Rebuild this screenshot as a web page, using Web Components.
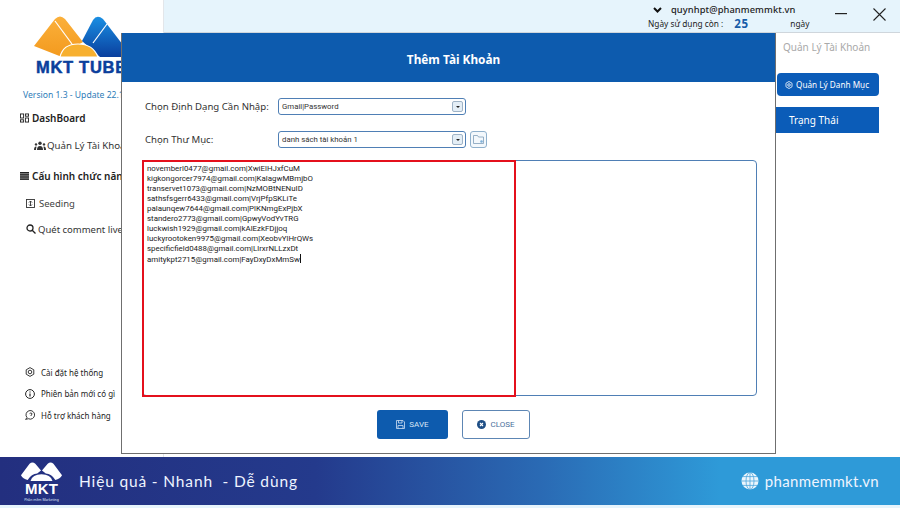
<!DOCTYPE html>
<html>
<head>
<meta charset="utf-8">
<style>
    html, body { margin: 0; padding: 0; background: #fff; }
    body { font-family: "Noto Sans", "Liberation Sans", sans-serif; width: 900px; height: 508px; overflow: hidden; }
</style>
</head>
<body>
<mkt-app>
    <mkt-sidebar slot="sidebar"></mkt-sidebar>
    <mkt-topbar slot="topbar"></mkt-topbar>
    <mkt-actions slot="actions"></mkt-actions>
    <mkt-footer slot="footer"></mkt-footer>
    <add-account-dialog slot="dialog"></add-account-dialog>
</mkt-app>

<script>
class MktApp extends HTMLElement
{
    constructor()
    {
        super();
        this.shadow = this.attachShadow({ mode: "open" });
    }

    connectedCallback()
    {
        this.shadow.innerHTML = `
            <style>
                :host { display: grid; position: relative; width: 900px; height: 508px; overflow: hidden;
                    grid-template-columns: 164px 1fr; grid-template-rows: 33px 424px 48px 3px; background: #fff; }
                .side { grid-column: 1; grid-row: 1 / 3; border-right: 1px solid #e3e6ea; }
                .top { grid-column: 2; grid-row: 1; }
                .main { grid-column: 2; grid-row: 2; display: flex; justify-content: flex-end; }
                .foot { grid-column: 1 / 3; grid-row: 3; }
                .strip { grid-column: 1 / 3; grid-row: 4; background: #e6f4fc; }
            </style>
            <div class="side"><slot name="sidebar"></slot></div>
            <div class="top"><slot name="topbar"></slot></div>
            <div class="main"><slot name="actions"></slot></div>
            <div class="foot"><slot name="footer"></slot></div>
            <div class="strip"></div>
            <slot name="dialog"></slot>
        `;
    }
}

class MktSidebar extends HTMLElement
{
    constructor()
    {
        super();
        this.shadow = this.attachShadow({ mode: "open" });
    }

    connectedCallback()
    {
        this.shadow.innerHTML = `
            <style>
                :host { display: flex; flex-direction: column; height: 100%; color: #222; white-space: nowrap; overflow: hidden; }
                .logo { padding: 15px 0 0 33px; box-sizing: border-box; height: 89px; }
                .logo svg { display: block; }
                .brand { font: 700 16.5px "Liberation Sans", sans-serif; color: #0b3f9c; letter-spacing: .7px; line-height: 18px; margin: 1px 0 0 3px; -webkit-text-stroke: .5px #0b3f9c; }
                .version { color: #2e7cb8; font-size: 8.6px; line-height: 13px; padding-left: 23px; }
                .item { display: flex; align-items: center; gap: 3px; }
                .head { font-size: 10px; font-weight: 600; padding-left: 20px; height: 14px; }
                .sub { font-size: 9.7px; color: #333; height: 14px; }
                svg { flex: none; }
                .bottom { margin-top: auto; padding: 0 0 0 25px; font-size: 8px; color: #222; display: flex; flex-direction: column; gap: 7.5px; margin-bottom: 35px; }
                .bottom .item { gap: 6px; height: 14px; }
            </style>
            <div class="logo">
                <svg width="100" height="42" viewBox="0 0 100 42">
                    <defs>
                        <linearGradient id="o" x1="0" y1="0" x2="0" y2="1"><stop offset="0" stop-color="#fbb03b"/><stop offset="1" stop-color="#f39a1e"/></linearGradient>
                        <linearGradient id="b" x1="0" y1="0" x2="0" y2="1"><stop offset="0" stop-color="#1a8fe3"/><stop offset="1" stop-color="#0a3f9e"/></linearGradient>
                    </defs>
                    <path d="M1 31 L22 4 Q27 -1 32 4 L50 27 L45 30 L29 42 Z" fill="url(#o)"/>
                    <path d="M49 26 L60 5 Q64 -1 70 4 L90 30 L88 42 L67 42 Z" fill="url(#b)"/>
                    <path d="M22 6 L39 29" stroke="#fff" stroke-width="1.2" fill="none"/>
                    <path d="M74 9 L60 28" stroke="#fff" stroke-width="1.2" fill="none"/>
                    <path d="M27 42 Q30 29 45 29 Q60 29 65 42Z" fill="#f7b02f" stroke="#fff" stroke-width="1.2"/>
                </svg>
                <div class="brand">MKT TUBE</div>
            </div>
            <div class="version">Version 1.3 - Update 22.1</div>
            <div class="item head" style="margin-top:9px">
                <svg width="9" height="10" viewBox="0 0 10 10" fill="none" stroke="#222"><rect x=".5" y=".5" width="3.5" height="4.5"/><rect x="6" y=".5" width="3.5" height="2.5"/><rect x=".5" y="7" width="3.5" height="2.5"/><rect x="6" y="5" width="3.5" height="4.5"/></svg>
                <span>DashBoard</span>
            </div>
            <div class="item sub" style="margin:13px 0 0 34px;gap:1px">
                <svg width="12" height="9" viewBox="0 0 12 9" fill="#333"><circle cx="6" cy="2.2" r="1.7"/><circle cx="2" cy="3.4" r="1.2"/><circle cx="10" cy="3.4" r="1.2"/><path d="M3 9 Q3 5 6 5 Q9 5 9 9Z M0 9 Q0 5.5 2 5.5 L2.6 5.7 Q2 7 2 9Z M12 9 Q12 5.5 10 5.5 L9.4 5.7 Q10 7 10 9Z"/></svg>
                <span>Quản Lý Tài Khoản</span>
            </div>
            <div class="item head" style="margin-top:17px">
                <svg width="9" height="8" viewBox="0 0 9 8" fill="#222"><rect width="9" height="1.6"/><rect y="2.1" width="9" height="1.6"/><rect y="4.2" width="9" height="1.6"/><rect y="6.3" width="9" height="1.6"/></svg>
                <span>Cấu hình chức năng</span>
            </div>
            <div class="item sub" style="margin:13px 0 0 26px;gap:4px;font-size:9.5px;color:#444">
                <svg width="9" height="9" viewBox="0 0 9 9" fill="none" stroke="#333" stroke-width=".9"><rect x=".5" y=".5" width="8" height="8"/><path d="M4.5 2v5M3 3.5l1.5-1.5L6 3.5M3 5.5L4.5 7 6 5.5"/></svg>
                <span>Seeding</span>
            </div>
            <div class="item sub" style="margin:12px 0 0 26px;gap:2px;font-size:9.5px;color:#333">
                <svg width="10" height="10" viewBox="0 0 10 10" fill="none" stroke="#222" stroke-width="1.3"><circle cx="4" cy="4" r="3"/><path d="M6.2 6.2L9.5 9.5"/></svg>
                <span>Quét comment live</span>
            </div>
            <div class="bottom">
                <div class="item">
                    <svg width="10" height="10" viewBox="0 0 10 10" fill="none" stroke="#222" stroke-width=".9"><path d="M5 .6L8.8 2.8V7.2L5 9.4 1.2 7.2V2.8Z"/><circle cx="5" cy="5" r="1.8"/></svg>
                    <span>Cài đặt hệ thống</span>
                </div>
                <div class="item">
                    <svg width="10" height="10" viewBox="0 0 10 10" fill="none" stroke="#222"><circle cx="5" cy="5" r="4.4"/><path d="M5 2.6v1M5 4.4v3.2" stroke-width="1.2"/></svg>
                    <span>Phiên bản mới có gì</span>
                </div>
                <div class="item">
                    <svg width="11" height="10" viewBox="0 0 11 10" fill="none" stroke="#222" stroke-width=".9" style="margin-right:-1px"><path d="M2 7.6A4.3 4.3 0 1 1 3.4 8.7L.6 9.4Z"/><path d="M4.6 3.6Q5.8 2.4 7 3.5 7.4 4.6 6 5.2V6" /></svg>
                    <span>Hỗ trợ khách hàng</span>
                </div>
            </div>
        `;
    }
}

class MktTopbar extends HTMLElement
{
    constructor()
    {
        super();
        this.shadow = this.attachShadow({ mode: "open" });
    }

    connectedCallback()
    {
        this.shadow.innerHTML = `
            <style>
                :host { display: flex; height: 32px; background: #e6f4fc; border-bottom: 1px solid #cfd6dc; justify-content: flex-end; color: #222; }
                .user { width: 175px; margin-right: 12px; padding-top: 3px; box-sizing: border-box; }
                .mail { display: flex; align-items: center; gap: 9px; padding-left: 5px; font-size: 9.3px; font-weight: 500; line-height: 14px; height: 14px; letter-spacing: .1px; }
                .days { display: flex; font-size: 8.3px; line-height: 14px; height: 14px; white-space: nowrap; }
                .days b { font-size: 11.5px; color: #175ca8; width: 67px; padding-left: 11px; box-sizing: border-box; letter-spacing: .6px; flex: none; }
                .win { display: flex; align-items: center; gap: 26px; padding: 0 14px 4px 0; }
            </style>
            <div class="user">
                <div class="mail">
                    <svg width="9" height="6" viewBox="0 0 9 6" fill="none" stroke="#111" stroke-width="2"><path d="M1 1l3.5 3.5L8 1"/></svg>
                    <span>quynhpt@phanmemmkt.vn</span>
                </div>
                <div class="days"><span>Ngày sử dụng còn :</span><b>25</b><span>ngày</span></div>
            </div>
            <div class="win">
                <svg width="12" height="2" viewBox="0 0 12 2"><rect width="12" height="1.2" fill="#222"/></svg>
                <svg width="13" height="13" viewBox="0 0 13 13" stroke="#222" stroke-width="1.1"><path d="M.5.5l12 12M12.5.5l-12 12"/></svg>
            </div>
        `;
    }
}

class MktActions extends HTMLElement
{
    constructor()
    {
        super();
        this.shadow = this.attachShadow({ mode: "open" });
    }

    connectedCallback()
    {
        this.shadow.innerHTML = `
            <style>
                :host { display: flex; flex-direction: column; width: 124px; box-sizing: border-box; padding-top: 7px; color: #fff; white-space: nowrap; }
                .title { color: #a9a9a9; font-size: 10px; line-height: 14px; padding-left: 7px; }
                .btn { background: #0b5cb8; display: flex; align-items: center; }
                .cat { height: 23px; width: 102px; margin: 19px 0 0 1px; border-radius: 4px; font-size: 8.2px; gap: 3px; padding-left: 8px; box-sizing: border-box; }
                .state { height: 26px; width: 103px; margin-top: 11px; font-size: 10px; padding-left: 13px; box-sizing: border-box; }
            </style>
            <div class="title">Quản Lý Tài Khoản</div>
            <div class="btn cat">
                <svg width="8" height="8" viewBox="0 0 10 10" fill="none" stroke="#fff"><path d="M5 .6L8.8 2.8V7.2L5 9.4 1.2 7.2V2.8Z"/><circle cx="5" cy="5" r="1.6"/></svg>
                <span>Quản Lý Danh Mục</span>
            </div>
            <div class="btn state">Trạng Thái</div>
        `;
    }
}

class MktFooter extends HTMLElement
{
    constructor()
    {
        super();
        this.shadow = this.attachShadow({ mode: "open" });
    }

    connectedCallback()
    {
        this.shadow.innerHTML = `
            <style>
                :host { display: flex; align-items: center; height: 48px; box-sizing: border-box; padding: 0 21px 0 20px;
                    background: linear-gradient(90deg, #232f7f 0%, #243a8c 35%, #2a6ab4 60%, #2e9ad8 80%, #2e9ad8 100%); color: #eef4ff; }
                .logo { width: 43px; display: flex; flex-direction: column; align-items: center; margin-right: 16px; overflow: hidden; white-space: nowrap; }
                .mk { font: 700 15px/13px "Liberation Sans", sans-serif; color: #fff; letter-spacing: .2px; }
                .tiny { font-size: 3.4px; line-height: 5px; color: #dfe6f5; margin-top: 2px; }
                .slogan { font: 400 15.5px "Lato", sans-serif; letter-spacing: .85px; white-space: pre; }
                .site { margin-left: auto; display: flex; align-items: center; gap: 6px; font: 400 15px "Lato", sans-serif; letter-spacing: .35px; }
            </style>
            <div class="logo">
                <svg width="43" height="21" viewBox="0 0 43 22" fill="#fff">
                    <path d="M0 15L9 3Q12 0 15 3L21 10 17 13Q11 13 7 20 2 19 0 15Z"/>
                    <path d="M22 10L28 3Q31 0 34 3L43 15Q41 19 36 20 32 13 26 13Z"/>
                    <path d="M10 21Q12 14 21.5 14 31 14 33 21Z"/>
                </svg>
                <span class="mk">MKT</span>
                <span class="tiny">Phần mềm Marketing</span>
            </div>
            <span class="slogan">Hiệu quả - Nhanh  - Dễ dùng</span>
            <span class="site">
                <svg width="18" height="18" viewBox="0 0 18 18"><circle cx="9" cy="9" r="8.5" fill="#eaf5fc"/><g fill="none" stroke="#4da5dc" stroke-width=".8"><ellipse cx="9" cy="9" rx="4" ry="8.5"/><path d="M9 .5v17M.5 9h17M2 4.6h14M2 13.4h14"/></g></svg>
                <span>phanmemmkt.vn</span>
            </span>
        `;
    }
}

const ACCOUNTS = [
    "novemberl0477@gmail.com|XwiElHJxfCuM",
    "kigkongorcer7974@gmail.com|KalagwMBmjbO",
    "transervet1073@gmail.com|NzMOBtNENuID",
    "sathsfsgerr6433@gmail.com|VrjPfpSKLiTe",
    "palaunqew7644@gmail.com|PlKNmgExPjbX",
    "standero2773@gmail.com|GpwyVodYvTRG",
    "luckwish1929@gmail.com|kAlEzkFDjjoq",
    "luckyrootoken9975@gmail.com|XeobvYlHrQWs",
    "specificfield0488@gmail.com|LlrxrNLLzxDt",
    "amitykpt2715@gmail.com|FayDxyDxMmSw"
];

class ComboField extends HTMLElement
{
    constructor()
    {
        super();
        this.shadow = this.attachShadow({ mode: "open" });
    }

    connectedCallback()
    {
        this.shadow.innerHTML = `
            <style>
                :host { display: flex; align-items: center; justify-content: space-between; width: 188px; height: 17px; box-sizing: border-box;
                    border: 1px solid #4f7fb5; border-radius: 3px; padding: 0 2px 0 3px; background: #fff; font: 7.8px Roboto, sans-serif; color: #333; }
                .arrow { width: 9px; height: 9px; border: 1px solid #9fb3c6; border-radius: 2px; background: #e4eef6; display: flex; align-items: center; justify-content: center; }
                .arrow i { width: 0; height: 0; border: 2px solid transparent; border-top: 2.5px solid #222; border-bottom: 0; }
            </style>
            <span><slot></slot></span>
            <span class="arrow"><i></i></span>
        `;
    }
}

class AddAccountDialog extends HTMLElement
{
    constructor()
    {
        super();
        this.shadow = this.attachShadow({ mode: "open" });
    }

    connectedCallback()
    {
        this.shadow.innerHTML = `
            <style>
                :host { display: flex; flex-direction: column; position: absolute; left: 121px; top: 33px; width: 655px; height: 421px; box-sizing: border-box;
                    background: #fff; border: 1px solid #6f6f6f; border-top: 0; }
                header { height: 49px; box-sizing: border-box; padding: 3px 0 0 10px; background: #0d5bae; color: #fff; display: flex; align-items: center; justify-content: center; font-size: 11.8px; font-weight: 700; flex: none; }
                .body { padding: 16px 18px 0 20px; display: flex; flex-direction: column; flex: 1; }
                .row { display: flex; align-items: center; height: 17px; margin-bottom: 16px; padding-left: 3px; }
                .row label { width: 133px; font-size: 9.6px; color: #333; white-space: nowrap; flex: none; }
                .folder { width: 15px; height: 15px; border: 1px solid #8fb0cc; border-radius: 3px; margin-left: 4px; display: flex; align-items: center; justify-content: center; background: #f3f8fc; }
                .text { position: relative; height: 236px; border: 1px solid #4f7fb5; border-radius: 4px; box-sizing: border-box; padding: 3px 4px; font: 7.9px/10px Roboto, sans-serif; color: #222; white-space: pre; }
                .caret { display: inline-block; width: 1px; height: 9px; background: #111; vertical-align: -1px; }
                .mark { position: absolute; left: -1px; top: -1px; width: 374px; height: 237px; box-sizing: border-box; border: 2px solid #e4101c; }
                .foot { display: flex; justify-content: center; gap: 14px; margin-top: 14px; padding-left: 8px; }
                .b { display: flex; align-items: center; justify-content: center; gap: 4px; width: 71px; height: 29px; box-sizing: border-box; border-radius: 3px; font: 8px Roboto, sans-serif; }
                .save { background: #0d5bae; color: #d8e6f5; }
                .close { width: 68px; background: #fff; border: 1px solid #5d86b4; color: #4a6f9b; }
            </style>
            <header>Thêm Tài Khoản</header>
            <div class="body">
                <div class="row">
                    <label>Chọn Định Dạng Cần Nhập:</label>
                    <combo-field>Gmail|Password</combo-field>
                </div>
                <div class="row" style="margin-bottom:12px">
                    <label>Chọn Thư Mục:</label>
                    <combo-field>danh sách tài khoản 1</combo-field>
                    <span class="folder">
                        <svg width="11" height="9" viewBox="0 0 11 9" fill="none" stroke="#7f9db8" stroke-width=".8"><path d="M.5 8.5V.5h4l1 1.5h5v6.5Z"/><circle cx="8.5" cy="6.5" r="1.3" fill="#7fb0d8" stroke="none"/></svg>
                    </span>
                </div>
                <div class="text">${ACCOUNTS.join("\n")}<span class="caret"></span><div class="mark"></div></div>
                <div class="foot">
                    <div class="b save">
                        <svg width="9" height="9" viewBox="0 0 9 9" fill="none" stroke="#cfe0f2" stroke-width=".8"><path d="M.5.5h6.5l1.5 1.5v6.5h-8Z"/><path d="M2.5.5v2.5h3.5V.5M2 8.5V5.5h5v3"/></svg>
                        <span>SAVE</span>
                    </div>
                    <div class="b close">
                        <svg width="9" height="9" viewBox="0 0 9 9"><circle cx="4.5" cy="4.5" r="4.5" fill="#1f4f86"/><path d="M3 3l3 3M6 3L3 6" stroke="#fff" stroke-width="1.1"/></svg>
                        <span>CLOSE</span>
                    </div>
                </div>
            </div>
        `;
    }
}

customElements.define("mkt-app", MktApp);
customElements.define("mkt-sidebar", MktSidebar);
customElements.define("mkt-topbar", MktTopbar);
customElements.define("mkt-actions", MktActions);
customElements.define("mkt-footer", MktFooter);
customElements.define("combo-field", ComboField);
customElements.define("add-account-dialog", AddAccountDialog);
</script>
</body>
</html>
